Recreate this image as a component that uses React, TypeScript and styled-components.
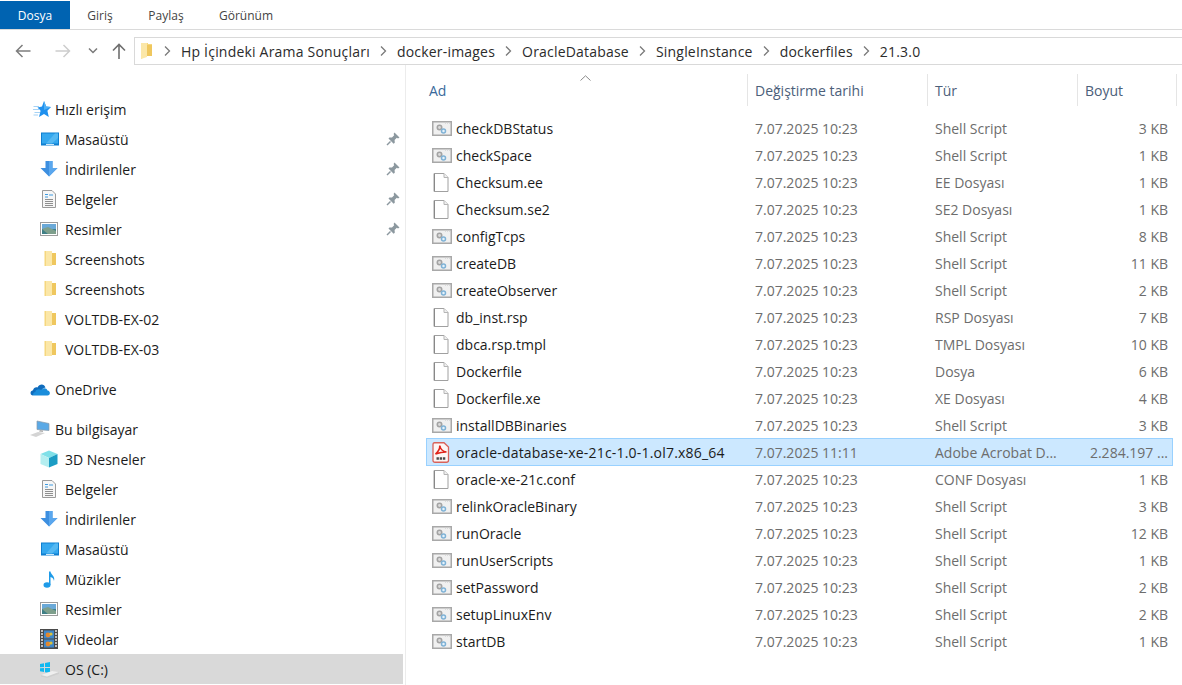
import styled, { createGlobalStyle } from "styled-components";

const GlobalStyle = createGlobalStyle`
  html, body {
    margin: 0;
    padding: 0;
    background: #fff;
    overflow: hidden;
  }
  * { box-sizing: border-box; }
`;

const font = `"Open Sans", "Noto Sans", "Liberation Sans", sans-serif`;

const Window = styled.div`
  width: 1182px;
  height: 685px;
  display: flex;
  flex-direction: column;
  font-family: ${font};
  font-size: 14px;
  color: #1b1b1b;
  background: #fff;
  overflow: hidden;
`;

const Ribbon = styled.div`
  display: flex;
  height: 30px;
  padding-top: 1px;
  border-bottom: 1px solid #dadada;
  font-size: 12px;
`;

const RibbonTab = styled.div<{ $active?: boolean; $width: number }>`
  width: ${(p) => p.$width}px;
  display: flex;
  align-items: center;
  justify-content: center;
  color: ${(p) => (p.$active ? "#fff" : "#444")};
  background: ${(p) => (p.$active ? "#0063b1" : "transparent")};
`;

const NavBar = styled.div`
  display: flex;
  align-items: center;
  height: 28px;
  margin-top: 7px;
`;

const NavButtons = styled.div`
  width: 134px;
  height: 28px;
  display: flex;
  align-items: center;
  padding-left: 15px;
`;

const NavGap = styled.span<{ $width: number }>`
  width: ${(p) => p.$width}px;
  flex: none;
`;

const AddressBar = styled.div`
  flex: 1;
  height: 28px;
  display: flex;
  align-items: center;
  padding-left: 5px;
  border: 1px solid #d9d9d9;
  border-right: none;
  color: #2b2b2b;
  letter-spacing: 0.2px;
`;

const Crumb = styled.span`
  display: flex;
  align-items: center;
  white-space: nowrap;
`;

const Content = styled.div`
  flex: 1;
  display: flex;
  min-height: 0;
`;

const Sidebar = styled.nav`
  width: 406px;
  flex: none;
  padding-top: 29px;
  border-right: 1px solid #ececec;
`;

const NavGroup = styled.div`
  margin-bottom: 10px;
`;

const NavRow = styled.div<{ $level?: number; $selected?: boolean }>`
  width: 403px;
  height: 30px;
  display: flex;
  align-items: center;
  position: relative;
  padding-left: ${(p) => (p.$level ? 40 : 30)}px;
  background: ${(p) => (p.$selected ? "#d9d9d9" : "transparent")};
`;

const NavIcon = styled.span`
  width: 25px;
  height: 20px;
  flex: none;
  display: flex;
  align-items: center;
`;

const Pin = styled.span`
  position: absolute;
  left: 386px;
  top: 8px;
  display: flex;
`;

const FileList = styled.main`
  flex: 1;
  min-width: 0;
  padding: 9px 0 0 20px;
`;

const HeaderRow = styled.div`
  position: relative;
  display: grid;
  grid-template-columns: 321px 180px 150px 100px;
  height: 32px;
  margin-bottom: 9px;
`;

const HeaderCell = styled.div<{ $first?: boolean }>`
  display: flex;
  align-items: center;
  padding-left: ${(p) => (p.$first ? 3 : 7)}px;
  border-left: ${(p) => (p.$first ? "none" : "1px solid #e5e5e5")};
  color: ${(p) => (p.$first ? "#39699b" : "#4c607a")};
`;

const LastHeaderCell = styled(HeaderCell)`
  border-right: 1px solid #e5e5e5;
`;

const SortMark = styled.span`
  position: absolute;
  left: 154px;
  top: 1px;
  display: flex;
`;

const Row = styled.div<{ $selected?: boolean }>`
  display: grid;
  grid-template-columns: 321px 180px 150px 96px;
  width: 747px;
  height: ${(p) => (p.$selected ? 28 : 27)}px;
  margin-top: ${(p) => (p.$selected ? -1 : 0)}px;
  align-items: center;
  border: 1px solid ${(p) => (p.$selected ? "#99d1ff" : "transparent")};
  background: ${(p) => (p.$selected ? "#cce8ff" : "transparent")};
`;

const NameCell = styled.div<{ $long?: boolean }>`
  display: flex;
  align-items: center;
  padding-left: 5px;
  margin-left: -1px;
  color: #1b1b1b;
  white-space: nowrap;
  letter-spacing: ${(p) => (p.$long ? "0.2px" : "normal")};
`;

const FileIconBox = styled.span`
  width: 25px;
  height: 20px;
  flex: none;
  display: flex;
  align-items: center;
`;

const MetaCell = styled.div`
  padding-left: 7px;
  color: #6d6d6d;
  white-space: nowrap;
`;

const SizeCell = styled(MetaCell)`
  padding: 0 6px 0 0;
  text-align: right;
`;

/* ---- drawings ---- */

const Chevron = () => (
  <svg width="27" height="12" viewBox="0 0 27 12" style={{ flex: "none" }}>
    <path d="M11 1.5 L15.5 6 L11 10.5" fill="none" stroke="#7a7a7a" strokeWidth="1.3" />
  </svg>
);

const ArrowLeft = ({ color }: { color: string }) => (
  <svg width="16" height="14" viewBox="0 0 16 14">
    <path d="M15.5 7 H1.5 M7.5 1 L1.5 7 L7.5 13" fill="none" stroke={color} strokeWidth="1.5" />
  </svg>
);

const ArrowRight = ({ color }: { color: string }) => (
  <svg width="16" height="14" viewBox="0 0 16 14">
    <path d="M0.5 7 H14.5 M8.5 1 L14.5 7 L8.5 13" fill="none" stroke={color} strokeWidth="1.5" />
  </svg>
);

const NavChevron = () => (
  <svg width="10" height="8" viewBox="0 0 10 8">
    <path d="M1 1.5 L5 5.5 L9 1.5" fill="none" stroke="#7a7a7a" strokeWidth="1.5" />
  </svg>
);

const ArrowUp = () => (
  <svg width="14" height="16" viewBox="0 0 14 16">
    <path d="M7 16 V1.5 M1 7.5 L7 1.5 L13 7.5" fill="none" stroke="#6f6f6f" strokeWidth="1.6" />
  </svg>
);

const SmallFolder = () => (
  <svg width="14" height="18" viewBox="0 0 14 18">
    <path d="M1 1 H8 L8 2 H12 V14 H6 L1 17 Z" fill="#f6d77f" />
    <path d="M1 1 H7 V15 L1 17 Z" fill="#fbe7a8" />
    <path d="M7 3 H12 V14 H7 Z" fill="#efc75e" />
  </svg>
);

const FolderIcon = () => (
  <svg width="14" height="18" viewBox="0 0 14 18" style={{ marginLeft: 3 }}>
    <path d="M3 1 H9 V16 H3 Z" fill="#fbe7a8" />
    <path d="M3 1 L3 16 H1.5 V1 Z" fill="#f6d77f" />
    <path d="M9 3 H13 V15 H9 Z" fill="#efc75e" />
  </svg>
);

const StarIcon = () => (
  <svg width="18" height="17" viewBox="0 0 18 17" style={{ marginLeft: 3 }}>
    <path d="M11 0 L13.2 5.4 L18 6 L14.4 9.8 L15.8 16 L11 13 L6 16 L7.6 9.8 L4.5 6.5 L9 5.4 Z" fill="#1e90ee" />
    <path d="M11 0 L13.2 5.4 L18 6 L11 9 Z" fill="#4fb0f5" />
    <path d="M0.5 5.5 H6 M0 8.5 H6.5 M1.5 11.5 H7 M0.5 14 H5" stroke="#a5d2f5" strokeWidth="1" />
  </svg>
);

const DesktopIcon = () => (
  <svg width="18" height="14" viewBox="0 0 18 14" style={{ marginLeft: 1 }}>
    <rect x="0" y="0.5" width="18" height="13" fill="#0f7fd0" />
    <path d="M1 1.5 H17 V11.5 H1 Z" fill="#35a8ef" />
    <path d="M5 11.5 L14 1.5 H17 V6 L11 11.5 Z" fill="#55b8f2" />
    <rect x="5" y="12" width="8" height="1" fill="#cfe9fa" />
  </svg>
);

const DownloadIcon = () => (
  <svg width="18" height="16" viewBox="0 0 18 16">
    <path d="M5.5 0 H12.5 V7 H17.5 L9 15.5 L0.5 7 H5.5 Z" fill="#3d8fe0" />
    <path d="M9 0 H12.5 V7 H17.5 L9 15.5 Z" fill="#5aa7ee" />
  </svg>
);

const DocsIcon = () => (
  <svg width="16" height="18" viewBox="0 0 16 18" style={{ marginLeft: 1 }}>
    <path d="M1.5 0.5 H11 L14.5 4 V17.5 H1.5 Z" fill="#f6f6f6" stroke="#9a9a9a" />
    <path d="M4 4.5 H7 M4 7 H7 M8 5 H12" stroke="#3f9be0" strokeWidth="1" />
    <path d="M4 9.5 H12 M4 11.5 H12 M4 13.5 H12 M4 15.5 H12" stroke="#8f8f8f" strokeWidth="1" />
  </svg>
);

const PicturesIcon = () => (
  <svg width="18" height="14" viewBox="0 0 18 14">
    <rect x="0.5" y="0.5" width="17" height="13" fill="#fff" stroke="#9c9c9c" />
    <rect x="2" y="2" width="14" height="5" fill="#6aa9d8" />
    <rect x="2" y="7" width="14" height="5" fill="#3f7f86" />
    <path d="M2 7 L8 5 L16 9 V12 H8 Z" fill="#7e9f8c" />
  </svg>
);

const OneDriveIcon = () => (
  <svg width="20" height="13" viewBox="0 0 20 13">
    <path d="M3 12.5 C0 12.5 -0.5 8 3 7.3 C3.5 4.5 6 3.8 7.5 4.5 C9 1 14 0 15.5 4.5 C13 5 12 6 11.5 7.5 Z" fill="#0f6cbd" />
    <path d="M3.5 12.5 H17.5 C20.5 12.5 20.8 8 17.5 7.5 C16.5 4.5 13 4.5 11.5 7 C8 5 5 7 5.5 9 C3.5 9 2.5 11.5 3.5 12.5 Z" fill="#1a8ddb" />
  </svg>
);

const ComputerIcon = () => (
  <svg width="20" height="18" viewBox="0 0 20 18">
    <path d="M7 1 L19 3.5 V10.5 L7 9.5 Z" fill="#5aa9e6" stroke="#8a9aa8" strokeWidth="0.7" />
    <path d="M0 15 L8 12 L15 13 L6 17 Z" fill="#d4d4d4" />
    <path d="M10 10 L13 10.5 V12 L9 11.5 Z" fill="#b0b0b0" />
  </svg>
);

const CubeIcon = () => (
  <svg width="18" height="18" viewBox="0 0 18 18">
    <path d="M9 0.5 L17.5 4 L9 8 L0.5 4 Z" fill="#7fe0e8" />
    <path d="M0.5 4 L9 8 V17.5 L0.5 14 Z" fill="#b4eef0" />
    <path d="M17.5 4 L9 8 V17.5 L17.5 14 Z" fill="#1b9cc4" />
  </svg>
);

const MusicIcon = () => (
  <svg width="14" height="17" viewBox="0 0 14 17" style={{ marginLeft: 3 }}>
    <ellipse cx="4" cy="14" rx="3.5" ry="2.7" fill="#1e9be8" />
    <path d="M6 14 V0.5 H7.5 C8 4 12.5 5 11 10 C10.5 7 9 6.5 7.5 6 V14 Z" fill="#1e9be8" />
  </svg>
);

const VideoIcon = () => (
  <svg width="18" height="20" viewBox="0 0 18 20">
    <rect x="0" y="0" width="18" height="20" fill="#4a4a4a" />
    <path d="M1 2 H3 M1 5 H3 M1 8 H3 M1 11 H3 M1 14 H3 M1 17 H3 M15 2 H17 M15 5 H17 M15 8 H17 M15 11 H17 M15 14 H17 M15 17 H17" stroke="#e5e5e5" strokeWidth="1.4" />
    <rect x="4" y="1.5" width="10" height="8" fill="#3f86c9" />
    <rect x="4" y="10.5" width="10" height="8" fill="#3f86c9" />
    <circle cx="8" cy="6" r="2.4" fill="#e2872f" />
    <circle cx="11" cy="5" r="1.6" fill="#d9c23a" />
    <circle cx="8" cy="15" r="2.4" fill="#e2872f" />
    <circle cx="11" cy="14" r="1.6" fill="#d9c23a" />
  </svg>
);

const DriveIcon = () => (
  <svg width="20" height="18" viewBox="0 0 20 18" style={{ marginLeft: -1 }}>
    <path d="M1 4 L5 3.3 V7 L1 7.3 Z M6 3.1 L11 2 V7 L6 7 Z M1 8.3 L5 8 V12 L1 11.3 Z M6 8 H11 V13 L6 12.2 Z" fill="#10b8f0" />
    <path d="M2 15 L13 11 L20 12 V14 L8 18 L2 16.5 Z" fill="#cfcfcf" />
    <path d="M2 15 L8 16.5 L20 12 L13 11 Z" fill="#efefef" />
  </svg>
);

const PinIcon = () => (
  <svg width="14" height="14" viewBox="0 0 14 14">
    <path d="M8.5 0.5 L13.5 5.5 L12 6.5 L10.8 5.8 L8.6 8 L8.8 10.8 L7.6 11.8 L2.5 6.5 L3.4 5.4 L6 5.5 L8.2 3.2 L7.6 2 Z" fill="#8c989f" />
    <path d="M4.5 9.5 L1 13" stroke="#8c989f" strokeWidth="1.4" />
  </svg>
);

const ScriptIcon = () => (
  <svg width="20" height="15" viewBox="0 0 20 15" style={{ marginLeft: 1 }}>
    <rect x="0.75" y="0.75" width="18.5" height="13.5" fill="#f0f0f0" stroke="#a8a8a8" strokeWidth="1.5" />
    <path d="M13 2.2 H18" stroke="#d0d0d0" strokeWidth="1" strokeDasharray="1 1" />
    <circle cx="7.5" cy="6.5" r="2.2" fill="#dcdcdc" stroke="#a3a3a3" strokeWidth="1.6" />
    <circle cx="11.5" cy="10" r="2" fill="#e6f2fb" stroke="#7fb2d6" strokeWidth="1.5" />
  </svg>
);

const PageIcon = () => (
  <svg width="16" height="19" viewBox="0 0 16 19" style={{ marginLeft: 2 }}>
    <path d="M1 0.5 H11 L15 4.5 V18.5 H1 Z" fill="#fff" stroke="#a0a0a0" />
    <path d="M11 0.5 V4.5 H15" fill="#f0f0f0" stroke="#b5b5b5" />
    <path d="M1.5 1 V18" stroke="#888" strokeWidth="1" />
  </svg>
);

const PdfIcon = () => (
  <svg width="18" height="21" viewBox="0 0 18 21" style={{ marginLeft: 1 }}>
    <path d="M2.5 0.75 H12 L16.5 5 V18.5 Q16.5 20.25 14.5 20.25 H3 Q1 20.25 1 18.5 V2.5 Q1 0.75 2.5 0.75 Z" fill="#fdf5f4" stroke="#d8625a" strokeWidth="1.3" />
    <path d="M3.5 12 C6.5 9.5 8 6.5 7.8 3.5 C8.3 7 10.5 9.5 14.5 10 C10.5 9.8 7 10.8 3.5 12 Z" fill="none" stroke="#e0231a" strokeWidth="1.6" />
    <path d="M4.5 16.5 H13.5" stroke="#4a4a4a" strokeWidth="2.4" strokeDasharray="2.4 0.8" />
  </svg>
);

/* ---- data ---- */

type NavItem = { label: string; icon: React.ReactNode; pinned?: boolean; selected?: boolean };

const quickAccess: NavItem[] = [
  { label: "Masaüstü", icon: <DesktopIcon />, pinned: true },
  { label: "İndirilenler", icon: <DownloadIcon />, pinned: true },
  { label: "Belgeler", icon: <DocsIcon />, pinned: true },
  { label: "Resimler", icon: <PicturesIcon />, pinned: true },
  { label: "Screenshots", icon: <FolderIcon /> },
  { label: "Screenshots", icon: <FolderIcon /> },
  { label: "VOLTDB-EX-02", icon: <FolderIcon /> },
  { label: "VOLTDB-EX-03", icon: <FolderIcon /> },
];

const thisPc: NavItem[] = [
  { label: "3D Nesneler", icon: <CubeIcon /> },
  { label: "Belgeler", icon: <DocsIcon /> },
  { label: "İndirilenler", icon: <DownloadIcon /> },
  { label: "Masaüstü", icon: <DesktopIcon /> },
  { label: "Müzikler", icon: <MusicIcon /> },
  { label: "Resimler", icon: <PicturesIcon /> },
  { label: "Videolar", icon: <VideoIcon /> },
  { label: "OS (C:)", icon: <DriveIcon />, selected: true },
];

const crumbs = [
  "Hp İçindeki Arama Sonuçları",
  "docker-images",
  "OracleDatabase",
  "SingleInstance",
  "dockerfiles",
  "21.3.0",
];

type Kind = "script" | "page" | "pdf";
type FileEntry = { name: string; kind: Kind; type: string; size: string; date?: string; selected?: boolean };

const shell = "Shell Script";

const files: FileEntry[] = [
  { name: "checkDBStatus", kind: "script", type: shell, size: "3 KB" },
  { name: "checkSpace", kind: "script", type: shell, size: "1 KB" },
  { name: "Checksum.ee", kind: "page", type: "EE Dosyası", size: "1 KB" },
  { name: "Checksum.se2", kind: "page", type: "SE2 Dosyası", size: "1 KB" },
  { name: "configTcps", kind: "script", type: shell, size: "8 KB" },
  { name: "createDB", kind: "script", type: shell, size: "11 KB" },
  { name: "createObserver", kind: "script", type: shell, size: "2 KB" },
  { name: "db_inst.rsp", kind: "page", type: "RSP Dosyası", size: "7 KB" },
  { name: "dbca.rsp.tmpl", kind: "page", type: "TMPL Dosyası", size: "10 KB" },
  { name: "Dockerfile", kind: "page", type: "Dosya", size: "6 KB" },
  { name: "Dockerfile.xe", kind: "page", type: "XE Dosyası", size: "4 KB" },
  { name: "installDBBinaries", kind: "script", type: shell, size: "3 KB" },
  {
    name: "oracle-database-xe-21c-1.0-1.ol7.x86_64",
    kind: "pdf",
    type: "Adobe Acrobat D...",
    size: "2.284.197 ...",
    date: "7.07.2025 11:11",
    selected: true,
  },
  { name: "oracle-xe-21c.conf", kind: "page", type: "CONF Dosyası", size: "1 KB" },
  { name: "relinkOracleBinary", kind: "script", type: shell, size: "3 KB" },
  { name: "runOracle", kind: "script", type: shell, size: "12 KB" },
  { name: "runUserScripts", kind: "script", type: shell, size: "1 KB" },
  { name: "setPassword", kind: "script", type: shell, size: "2 KB" },
  { name: "setupLinuxEnv", kind: "script", type: shell, size: "2 KB" },
  { name: "startDB", kind: "script", type: shell, size: "1 KB" },
];

const fileIcon = (kind: Kind) => {
  if (kind === "pdf") return <PdfIcon />;
  if (kind === "page") return <PageIcon />;
  return <ScriptIcon />;
};

const renderNavItem = (item: NavItem, i: number) => (
  <NavRow key={i} $level={1} $selected={item.selected}>
    <NavIcon>{item.icon}</NavIcon>
    {item.label}
    {item.pinned && (
      <Pin>
        <PinIcon />
      </Pin>
    )}
  </NavRow>
);

export default function App() {
  return (
    <Window>
      <GlobalStyle />
      <Ribbon>
        <RibbonTab $active $width={70}>Dosya</RibbonTab>
        <RibbonTab $width={60}>Giriş</RibbonTab>
        <RibbonTab $width={72}>Paylaş</RibbonTab>
        <RibbonTab $width={88}>Görünüm</RibbonTab>
      </Ribbon>
      <NavBar>
        <NavButtons>
          <ArrowLeft color="#7d7d7d" />
          <NavGap $width={24} />
          <ArrowRight color="#cdcdcd" />
          <NavGap $width={17} />
          <NavChevron />
          <NavGap $width={14} />
          <ArrowUp />
        </NavButtons>
        <AddressBar>
          <SmallFolder />
          {crumbs.map((c, i) => (
            <Crumb key={i}>
              <Chevron />
              {c}
            </Crumb>
          ))}
        </AddressBar>
      </NavBar>
      <Content>
        <Sidebar>
          <NavGroup>
            <NavRow>
              <NavIcon><StarIcon /></NavIcon>
              Hızlı erişim
            </NavRow>
            {quickAccess.map(renderNavItem)}
          </NavGroup>
          <NavGroup>
            <NavRow>
              <NavIcon><OneDriveIcon /></NavIcon>
              OneDrive
            </NavRow>
          </NavGroup>
          <NavRow>
            <NavIcon><ComputerIcon /></NavIcon>
            Bu bilgisayar
          </NavRow>
          {thisPc.map(renderNavItem)}
        </Sidebar>
        <FileList>
          <HeaderRow>
            <SortMark>
              <svg width="11" height="6" viewBox="0 0 11 6">
                <path d="M0.5 5.5 L5.5 0.8 L10.5 5.5" fill="none" stroke="#8a8a8a" />
              </svg>
            </SortMark>
            <HeaderCell $first>Ad</HeaderCell>
            <HeaderCell>Değiştirme tarihi</HeaderCell>
            <HeaderCell>Tür</HeaderCell>
            <LastHeaderCell>Boyut</LastHeaderCell>
          </HeaderRow>
          {files.map((f) => (
            <Row key={f.name} $selected={f.selected}>
              <NameCell $long={f.selected}>
                <FileIconBox>{fileIcon(f.kind)}</FileIconBox>
                {f.name}
              </NameCell>
              <MetaCell>{f.date ?? "7.07.2025 10:23"}</MetaCell>
              <MetaCell>{f.type}</MetaCell>
              <SizeCell>{f.size}</SizeCell>
            </Row>
          ))}
        </FileList>
      </Content>
    </Window>
  );
}
